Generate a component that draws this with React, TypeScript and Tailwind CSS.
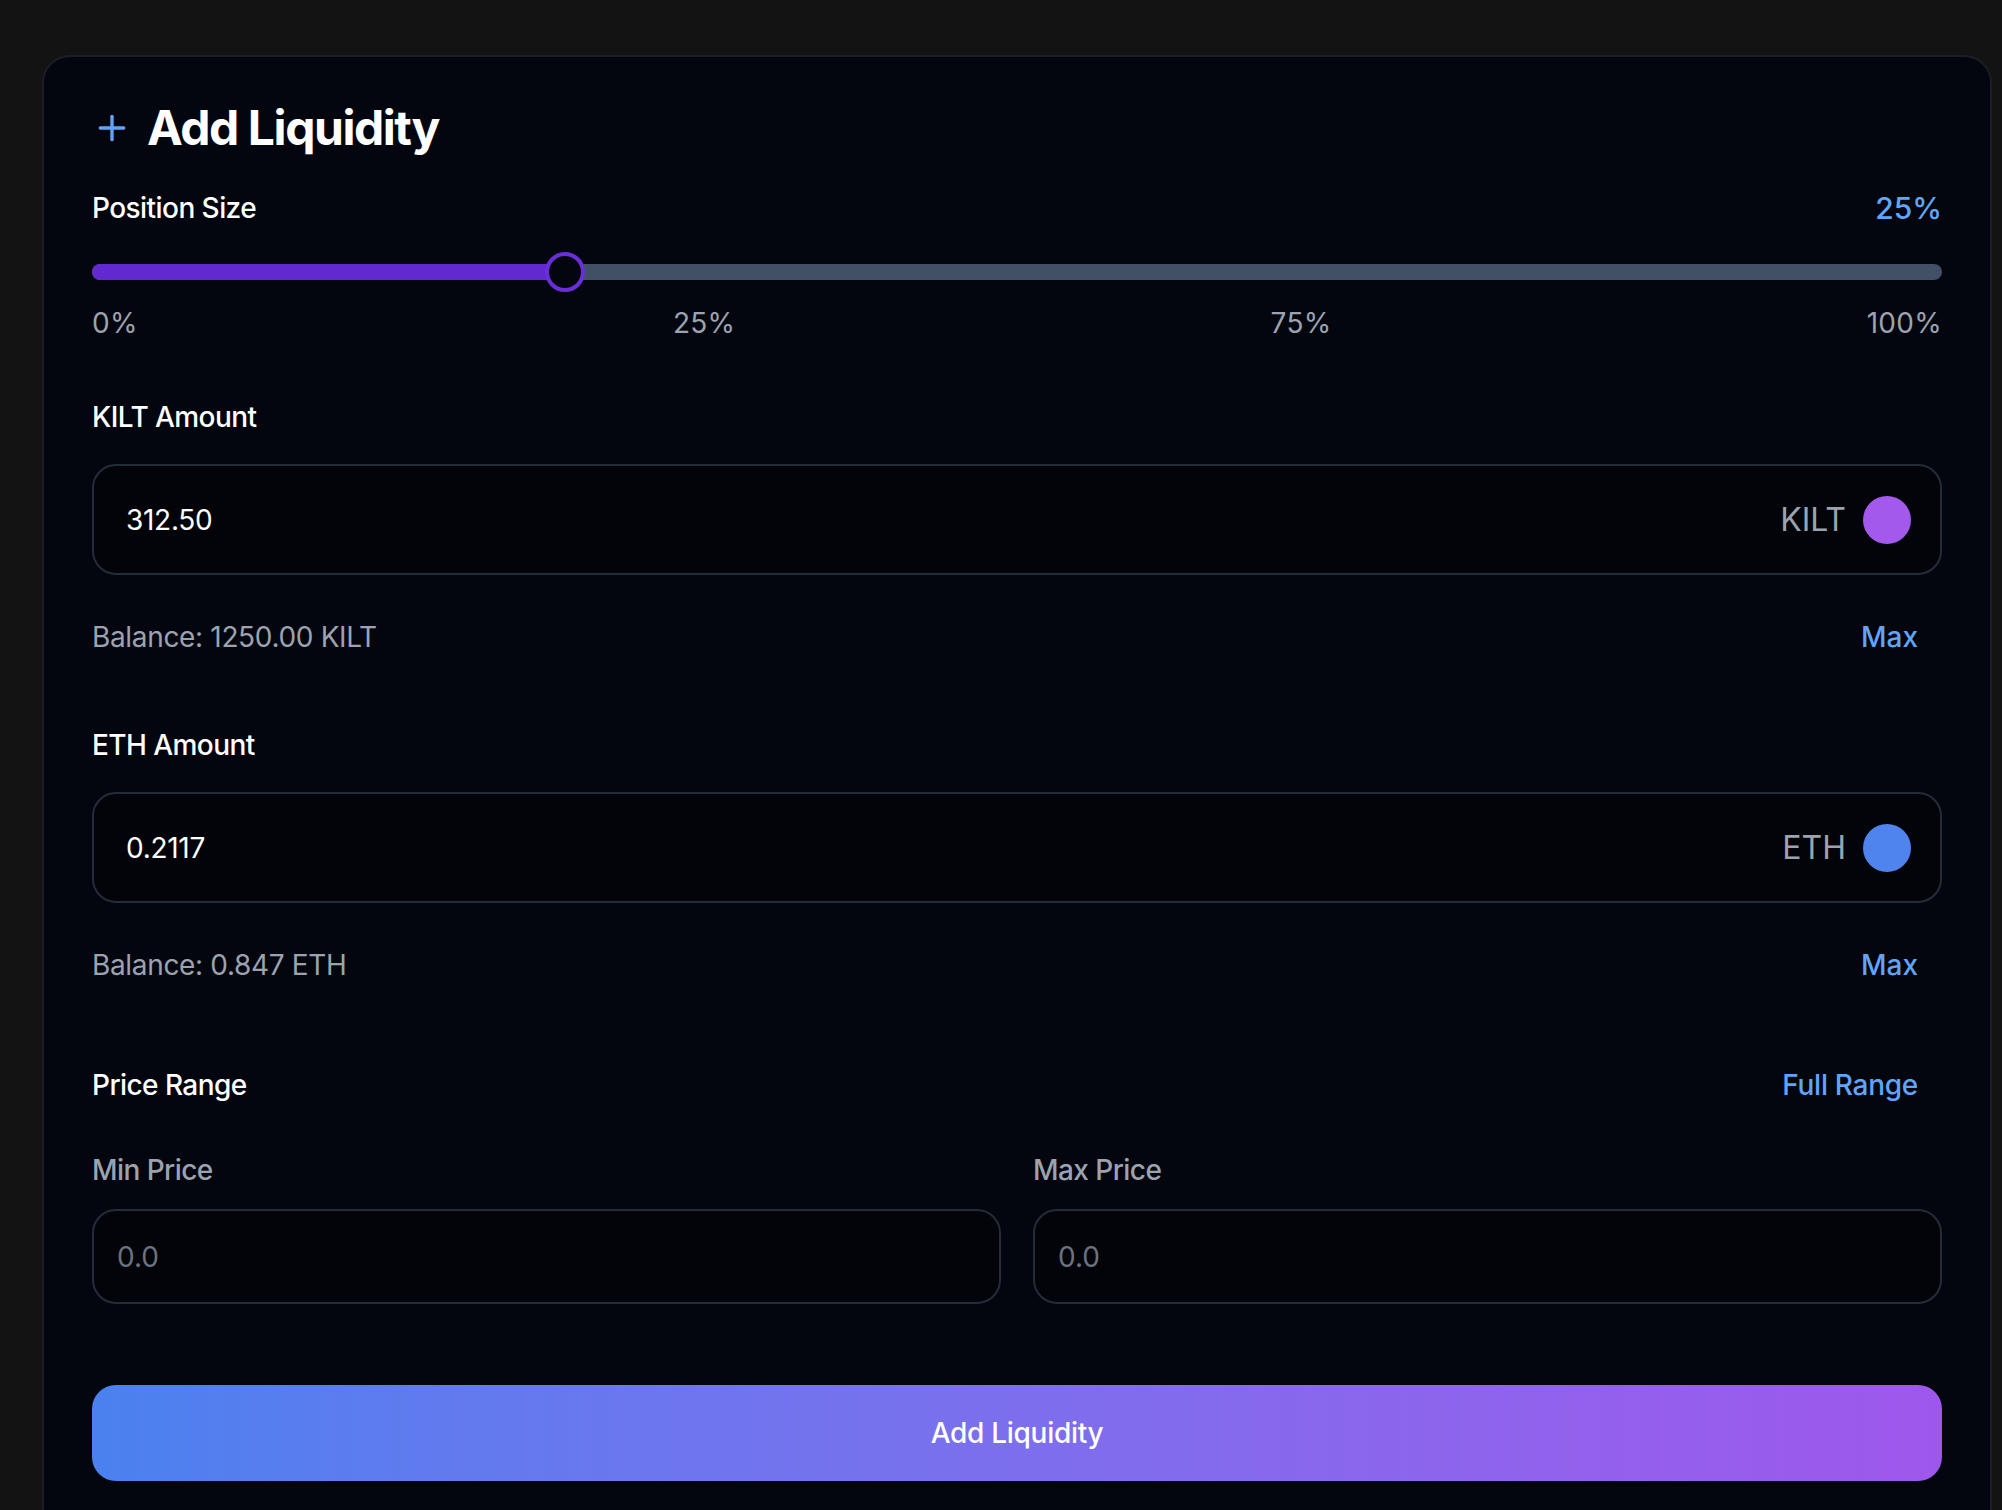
import { Plus } from "lucide-react"

interface TokenInputProps {
  label: string
  value: string
  symbol: string
  dot: string
  balance: string
}

function TokenInput({ label, value, symbol, dot, balance }: TokenInputProps) {
  return (
    <div>
      <div className="text-[28px] leading-[40px] font-medium tracking-[-0.02em] text-white">{label}</div>
      <div className="mt-[27px] h-[111px] flex items-center justify-between rounded-[24px] border-2 border-[#252c39] bg-[#020409] pl-[32px] pr-[29px]">
        <input
          readOnly
          value={value}
          className="flex-1 bg-transparent outline-none text-[28px] leading-[40px] tracking-[-0.01em] text-white"
        />
        <div className="flex items-center gap-[17px]">
          <span className="text-[32px] leading-[40px] text-[#9ca3af]">{symbol}</span>
          <span className={`w-[48px] h-[48px] rounded-full ${dot}`}></span>
        </div>
      </div>
      <div className="mt-[42px] flex justify-between items-center pr-[24px]">
        <span className="text-[28px] leading-[40px] tracking-[-0.012em] text-[#9ca3af]">Balance: {balance}</span>
        <button className="text-[28px] leading-[40px] font-medium text-[#60a5fa]">Max</button>
      </div>
    </div>
  )
}

export default function App() {
  const position = 25
  const trackWidth = 1850
  const thumb = 40
  const thumbCenter = thumb / 2 + (position / 100) * (trackWidth - thumb)

  return (
    <div className="h-[1510px] overflow-hidden bg-[#131313] font-['Inter',sans-serif] pt-[55px] pl-[42px]">
      <div className="w-[1950px] h-[1600px] rounded-[28px] border-2 border-[#1b1e28] bg-[#03060f] px-[48px] pt-[39px]">
        {/* Header */}
        <div className="h-[64px] flex items-center gap-[15px]">
          <Plus size={40} strokeWidth={2} className="text-[#60a5fa]" />
          <h1 className="text-[48px] leading-[64px] font-bold tracking-[-0.03em] text-white">Add Liquidity</h1>
        </div>

        {/* Position size */}
        <div className="mt-[28px] flex justify-between items-center">
          <span className="text-[28px] leading-[40px] font-medium tracking-[-0.02em] text-white">Position Size</span>
          <span className="text-[30px] leading-[40px] font-medium text-[#60a5fa]">{position}%</span>
        </div>

        <div className="relative mt-[24px] h-[40px] flex items-center">
          <div className="w-full h-[16px] rounded-full bg-[#425067] overflow-hidden">
            <div className="h-full bg-[#6329d1]" style={{ width: thumbCenter }}></div>
          </div>
          <div
            className="absolute top-0 w-[40px] h-[40px] rounded-full border-[4px] border-[#6a2ed9] bg-[#03060f]"
            style={{ left: thumbCenter - thumb / 2 }}
          ></div>
        </div>

        <div className="mt-[11px] flex justify-between text-[28px] leading-[40px] tracking-[0.01em] text-[#9ca3af]">
          <span>0%</span>
          <span>25%</span>
          <span>75%</span>
          <span>100%</span>
        </div>

        {/* Amounts */}
        <div className="mt-[54px]">
          <TokenInput label="KILT Amount" value="312.50" symbol="KILT" dot="bg-[#a259ec]" balance="1250.00 KILT" />
        </div>
        <div className="mt-[68px]">
          <TokenInput label="ETH Amount" value="0.2117" symbol="ETH" dot="bg-[#4f84ee]" balance="0.847 ETH" />
        </div>

        {/* Price range */}
        <div className="mt-[80px] flex justify-between items-center pr-[24px]">
          <span className="text-[28px] leading-[40px] font-medium tracking-[-0.02em] text-white">Price Range</span>
          <button className="text-[28px] leading-[40px] font-medium tracking-[-0.01em] text-[#60a5fa]">Full Range</button>
        </div>

        <div className="mt-[45px] grid grid-cols-2 gap-[32px]">
          {["Min Price", "Max Price"].map(label => (
            <div key={label}>
              <div className="text-[28px] leading-[40px] font-medium tracking-[-0.02em] text-[#9ca3af]">{label}</div>
              <input
                placeholder="0.0"
                className="mt-[19px] w-full h-[95px] rounded-[24px] border-2 border-[#252c39] bg-[#020409] px-[23px] text-[28px] text-white placeholder-[#6b7280] outline-none"
              />
            </div>
          ))}
        </div>

        <button className="mt-[81px] w-full h-[96px] rounded-[24px] bg-linear-to-r from-[#4a81ef] to-[#9e57ec] text-[28px] font-medium tracking-[-0.01em] text-white">
          Add Liquidity
        </button>
      </div>
    </div>
  )
}
